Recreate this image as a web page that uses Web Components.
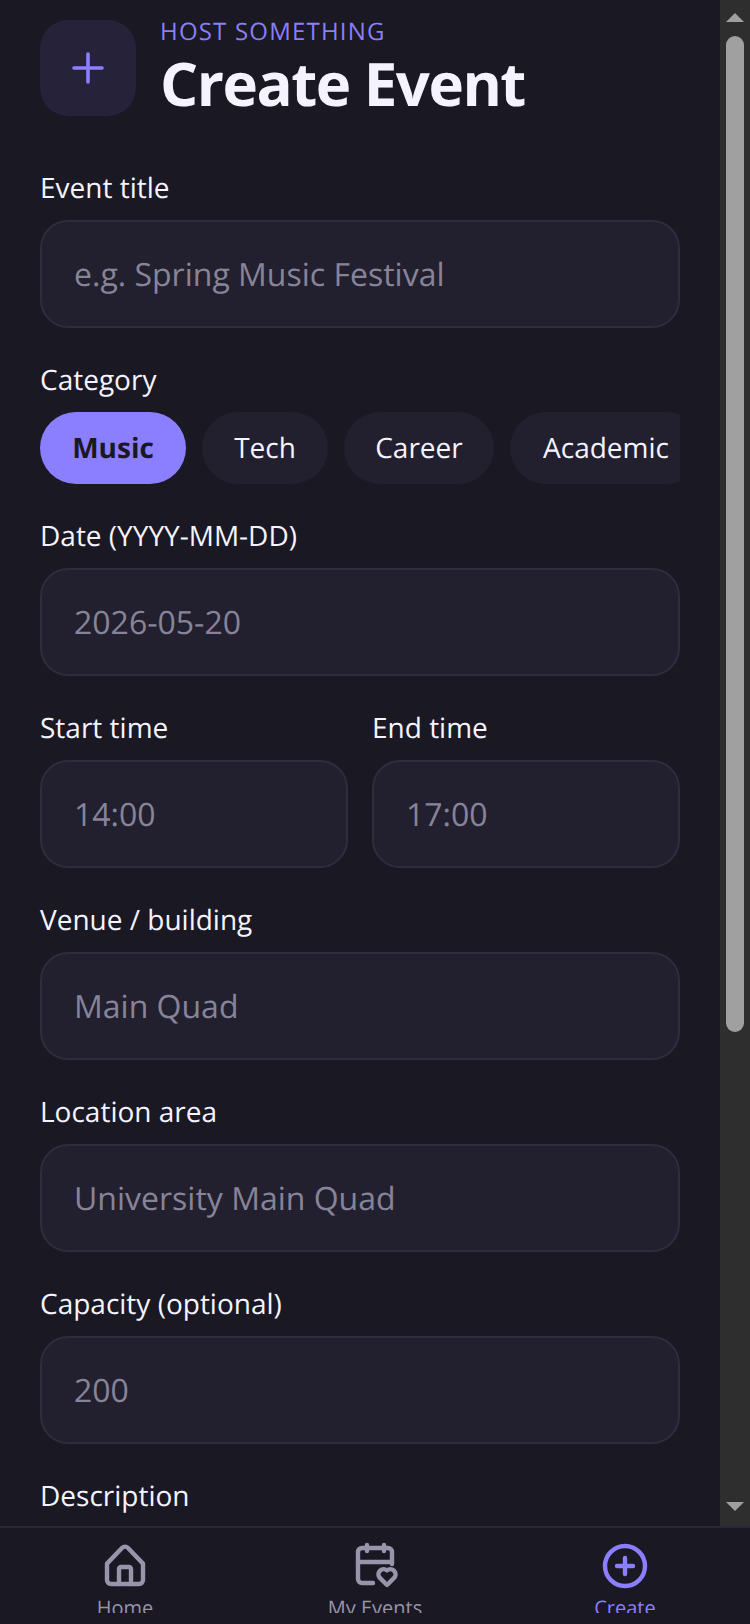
<!DOCTYPE html>
<html>
<head>
<meta charset="utf-8">
<style>
  html, body { margin: 0; height: 100%; background: #191823; }
  body { font-family: "Open Sans", "Noto Sans", sans-serif; text-rendering: geometricPrecision; }
</style>
</head>
<body>
<app-screen>
  <page-header eyebrow="HOST SOMETHING" title="Create Event"></page-header>
  <form-field label="Event title" placeholder="e.g. Spring Music Festival"></form-field>
  <category-picker label="Category"></category-picker>
  <form-field label="Date (YYYY-MM-DD)" placeholder="2026-05-20"></form-field>
  <field-row>
    <form-field label="Start time" placeholder="14:00"></form-field>
    <form-field label="End time" placeholder="17:00"></form-field>
  </field-row>
  <form-field label="Venue / building" placeholder="Main Quad"></form-field>
  <form-field label="Location area" placeholder="University Main Quad"></form-field>
  <form-field label="Capacity (optional)" placeholder="200"></form-field>
  <form-field label="Description" placeholder=""></form-field>
</app-screen>
<script>
class AppScreen extends HTMLElement {
  constructor() {
    super();
    this.root = this.attachShadow({ mode: 'open' });
    this.root.innerHTML = `
      <style>
        :host { display: flex; flex-direction: column; height: 1624px; overflow: hidden; background: #191823; }
        .top { display: flex; height: 1526px; flex: none; }
        .content { flex: 1; min-width: 0; overflow: hidden; padding: 20px 40px 0; }
      </style>
      <div class="top">
        <div class="content"><slot></slot></div>
        <fake-scrollbar></fake-scrollbar>
      </div>
      <bottom-nav></bottom-nav>
    `;
  }
}

class FakeScrollbar extends HTMLElement {
  constructor() {
    super();
    this.root = this.attachShadow({ mode: 'open' });
    this.root.innerHTML = `
      <style>
        :host { display: flex; flex-direction: column; align-items: center; width: 30px; flex: none; background: #2e2e2e; }
        .arrow { width: 0; height: 0; border-left: 9px solid transparent; border-right: 9px solid transparent; flex: none; }
        .up { border-bottom: 9px solid #a0a0a0; margin-top: 13px; }
        .down { border-top: 9px solid #a0a0a0; margin-top: auto; margin-bottom: 15px; }
        .thumb { width: 18px; height: 996px; margin-top: 14px; border-radius: 9px; background: #a0a0a0; flex: none; }
      </style>
      <div class="arrow up"></div>
      <div class="thumb"></div>
      <div class="arrow down"></div>
    `;
  }
}

class PageHeader extends HTMLElement {
  constructor() {
    super();
    this.root = this.attachShadow({ mode: 'open' });
    this.root.innerHTML = `
      <style>
        :host { display: flex; gap: 24px; height: 96px; margin-bottom: 52px; }
        .icon { width: 96px; height: 96px; border-radius: 28px; background: #25223a; display: flex; align-items: center; justify-content: center; flex: none; }
        .eyebrow { font-size: 24px; line-height: 23px; letter-spacing: 1.2px; color: #8b7ff5; }
        h1 { margin: 4px 0 0; font-size: 60px; line-height: 72px; font-weight: 700; letter-spacing: -1.5px; color: #f5f3ff; }
      </style>
      <div class="icon">
        <svg width="40" height="40" viewBox="0 0 40 40" fill="none" stroke="#8b7fff" stroke-width="3.6" stroke-linecap="round"><path d="M20 6v28M6 20h28"/></svg>
      </div>
      <div>
        <div class="eyebrow"></div>
        <h1></h1>
      </div>
    `;
  }
  connectedCallback() {
    this.root.querySelector('.eyebrow').textContent = this.getAttribute('eyebrow');
    this.root.querySelector('h1').textContent = this.getAttribute('title');
  }
}

class FormField extends HTMLElement {
  constructor() {
    super();
    this.root = this.attachShadow({ mode: 'open' });
    this.root.innerHTML = `
      <style>
        :host { display: block; margin-bottom: 32px; min-width: 0; }
        .label { font-size: 28px; line-height: 40px; margin-bottom: 12px; color: #f5f3ff; }
        .box { box-sizing: border-box; height: 108px; border: 2px solid #2f2c3f; border-radius: 28px; background: #22202e; padding: 0 32px; display: flex; align-items: center; font-size: 32px; color: #87849a; }
      </style>
      <div class="label"></div>
      <div class="box"></div>
    `;
  }
  connectedCallback() {
    this.root.querySelector('.label').textContent = this.getAttribute('label');
    this.root.querySelector('.box').textContent = this.getAttribute('placeholder');
  }
}

class FieldRow extends HTMLElement {
  constructor() {
    super();
    this.root = this.attachShadow({ mode: 'open' });
    this.root.innerHTML = `
      <style>
        :host { display: grid; grid-template-columns: 1fr 1fr; gap: 24px; }
      </style>
      <slot></slot>
    `;
  }
}

class CategoryPicker extends HTMLElement {
  constructor() {
    super();
    this.root = this.attachShadow({ mode: 'open' });
    this.root.innerHTML = `
      <style>
        :host { display: block; margin-bottom: 32px; }
        .label { font-size: 28px; line-height: 40px; margin-bottom: 12px; color: #f5f3ff; }
        .chips { display: flex; gap: 16px; overflow: hidden; }
        .chip { flex: none; box-sizing: border-box; height: 72px; border-radius: 36px; display: flex; align-items: center; justify-content: center; font-size: 28px; background: #22202e; color: #f5f3ff; }
        .chip.on { background: #8b7fff; color: #191823; font-weight: 700; }
      </style>
      <div class="label"></div>
      <div class="chips">
        <div class="chip on" style="width: 146px">Music</div>
        <div class="chip" style="width: 126px">Tech</div>
        <div class="chip" style="width: 150px">Career</div>
        <div class="chip" style="width: 192px">Academic</div>
      </div>
    `;
  }
  connectedCallback() {
    this.root.querySelector('.label').textContent = this.getAttribute('label');
  }
}

class BottomNav extends HTMLElement {
  constructor() {
    super();
    this.root = this.attachShadow({ mode: 'open' });
    this.root.innerHTML = `
      <style>
        :host { display: grid; grid-template-columns: repeat(3, 1fr); box-sizing: border-box; height: 98px; flex: none; border-top: 2px solid #2a2836; background: #191823; overflow: hidden; }
        .tab { display: flex; flex-direction: column; align-items: center; padding-top: 14px; color: #9894aa; font-size: 20px; height: 85px; overflow: hidden; box-sizing: border-box; line-height: 30px; }
        .tab.on { color: #8b7fff; }
        svg { width: 48px; height: 48px; flex: none; margin-bottom: 3px; }
      </style>
      <div class="tab">
        <svg viewBox="0 0 24 24" fill="none" stroke="currentColor" stroke-width="2.2" stroke-linejoin="round" stroke-linecap="round"><path d="M3 10.8 10.6 2.9a2 2 0 0 1 2.8 0L21 10.8V19a2 2 0 0 1-2 2H5a2 2 0 0 1-2-2z"/><path d="M9 21v-7.5a1 1 0 0 1 1-1h4a1 1 0 0 1 1 1V21"/></svg>
        Home
      </div>
      <div class="tab">
        <svg viewBox="0 0 24 24" fill="none" stroke="currentColor" stroke-width="2.2" stroke-linejoin="round" stroke-linecap="round"><path d="M11 20.5H5.5a2 2 0 0 1-2-2V5a2 2 0 0 1 2-2h13a2 2 0 0 1 2 2v6"/><path d="M8 1.5v3M16.5 1.5v3M3.5 10h17"/><path d="M18 21.5l-3.8-3.8a2.6 2.6 0 0 1 3.8-3.5 2.6 2.6 0 0 1 3.8 3.5z"/></svg>
        My Events
      </div>
      <div class="tab on">
        <svg viewBox="0 0 24 24" fill="none" stroke="currentColor" stroke-width="2.2" stroke-linecap="round"><circle cx="12" cy="12" r="10"/><path d="M12 8v8M8 12h8"/></svg>
        Create
      </div>
    `;
  }
}

customElements.define('fake-scrollbar', FakeScrollbar);
customElements.define('bottom-nav', BottomNav);
customElements.define('app-screen', AppScreen);
customElements.define('page-header', PageHeader);
customElements.define('form-field', FormField);
customElements.define('field-row', FieldRow);
customElements.define('category-picker', CategoryPicker);
</script>
</body>
</html>
